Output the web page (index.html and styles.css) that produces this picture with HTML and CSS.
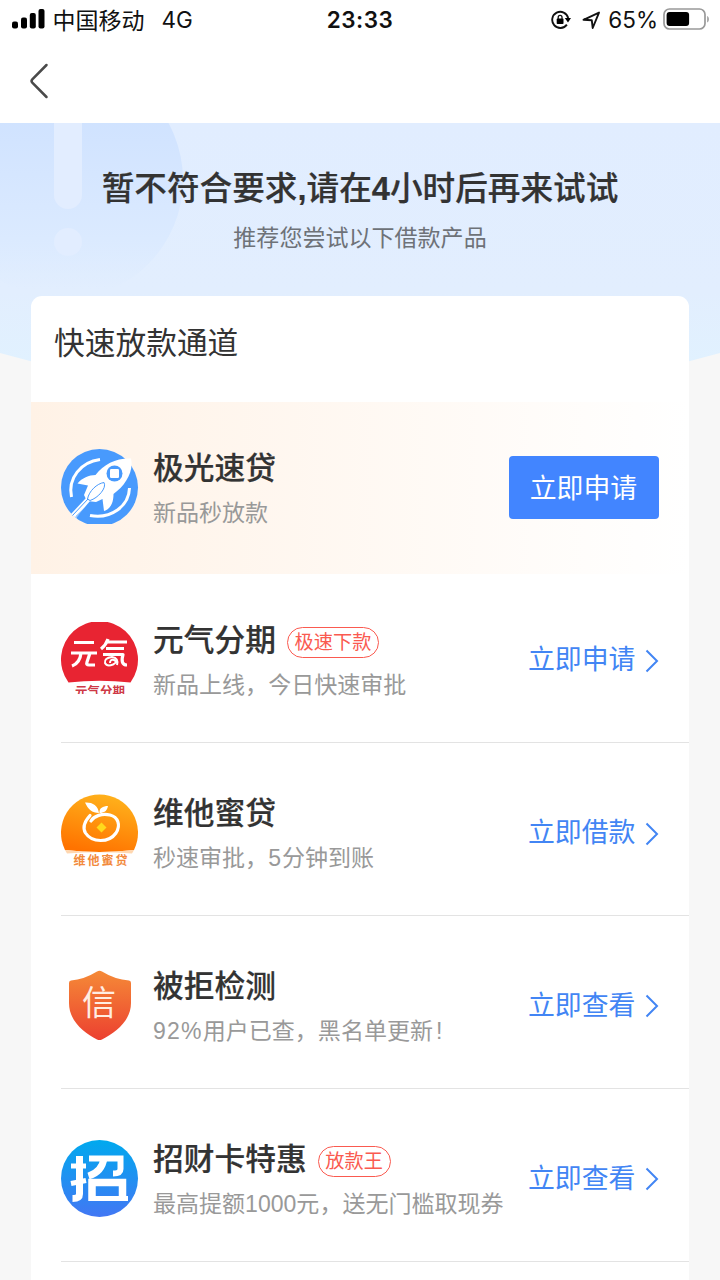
FILE: index.html
```html
<!DOCTYPE html>
<html lang="zh-CN">
<head>
<meta charset="utf-8">
<title>借款产品推荐</title>
<link rel="stylesheet" href="styles.css">
</head>
<body>
<div class="screen">
  <header class="top">
    <div class="status">
      <div class="status-left">
        <svg class="signal" width="33" height="20" viewBox="0 0 33 20"><rect x="0" y="12.500" width="6" height="7" rx="2"/><rect x="9" y="8.500" width="6" height="11" rx="2"/><rect x="17.800" y="4" width="6" height="15.500" rx="2"/><rect x="26.500" y="0" width="6" height="19.500" rx="2"/></svg>
        <span class="carrier">中国移动</span><span class="network">4G</span>
      </div>
      <div class="clock">23:33</div>
      <div class="status-right">
        <svg class="lock" width="20" height="20" viewBox="0 0 20 20"><path d="M15.900 14.600A8.100 8.100 0 1 1 17.200 8" fill="none" stroke="#111" stroke-width="1.900"/><path d="M13.800 8h6.200l-3 4.500z"/><rect x="5.700" y="8.600" width="6.800" height="5.400" rx=".8"/><path d="M7.200 9V7.300a1.900 1.900 0 0 1 3.800 0V9" fill="none" stroke="#111" stroke-width="1.300"/></svg>
        <svg class="locate" width="19" height="19" viewBox="0 0 19 19"><path d="M1.500 8.800 17 1.600 10.700 17 9.800 9.300z" fill="none" stroke="#111" stroke-width="1.900" stroke-linejoin="round"/></svg>
        <span class="percent">65%</span>
        <svg class="battery" width="47" height="23" viewBox="0 0 47 23"><rect x="1" y="1" width="41" height="20" rx="5.500" fill="none" stroke="#999" stroke-width="1.700"/><rect x="3.600" y="4" width="22.500" height="14" rx="3" fill="#000"/><path d="M44.200 8v6.600c2.200-1 2.200-5.600 0-6.600z" fill="#999"/></svg>
      </div>
    </div>
    <nav class="nav"><svg width="20" height="36" viewBox="0 0 20 36"><path d="M17.500 2 3.300 16.300q-1.500 1.700 0 3.400L17.500 34" fill="none" stroke="#4a4a4a" stroke-width="2.500" stroke-linecap="round"/></svg></nav>
  </header>

  <main class="page">
    <svg class="backdrop" width="720" height="257" viewBox="0 0 720 257">
      <defs>
        <linearGradient id="sky" x2="0" y2="1"><stop stop-color="#e1edff"/><stop offset=".6" stop-color="#e2eefe"/><stop offset="1" stop-color="#e0f3ff"/></linearGradient>
        <linearGradient id="disc" x2="0" y2="1"><stop offset=".2" stop-color="#cfe2ff"/><stop offset=".75" stop-color="#dbeaff"/><stop offset=".96" stop-color="#dbeaff" stop-opacity="0"/></linearGradient>
      </defs>
      <path d="M0 0H720V230Q360 330 0 230Z" fill="url(#sky)"/>
      <circle cx="64" cy="57" r="119" fill="url(#disc)"/>
      <path d="M54 0H82V72a14 14 0 0 1-28 0Z" fill="#e2edff"/>
      <circle cx="68" cy="119" r="14" fill="#e2edff"/>
    </svg>

    <section class="hero">
      <h1>暂不符合要求<b>,</b>请在<b>4</b>小时后再来试试</h1>
      <p>推荐您尝试以下借款产品</p>
    </section>

    <section class="card">
      <h2>快速放款通道</h2>

      <article class="row featured">
        <svg class="logo" width="78" height="78" viewBox="0 0 78 78">
          <defs><clipPath id="c1"><path d="M0 0H78V75H0Z"/></clipPath></defs>
          <g clip-path="url(#c1)">
            <circle cx="38.500" cy="38.500" r="38.500" fill="#489afd"/>
            <g fill="none" stroke="#fff" stroke-width="3"><path d="M39 10.500C20 13 6.500 29 10.500 48"/><path d="M68.500 39C68 57 50 70.500 29 66.500"/></g>
            <path d="M70 9.500C55 9 43 15 34.500 26 28 26 21 29 16.500 34.500L27 36.500 23 46 26 52 35 53 41.500 50 43 62C50 60 52.500 53 52.500 45 64 37 73 23 70 9.500Z" fill="#fff"/>
            <circle cx="53.500" cy="24.500" r="8" fill="#489afd"/><rect x="49" y="20" width="9" height="9" rx="1.200" fill="#fff"/>
            <path d="M10 65 25 49 29 52 15 69Z" fill="#fff"/>
            <path d="M11.500 66.500 27 50M14.500 68 30 53M26.500 50C28 42 36 34.500 43 33.500 46 39 37 49 29 51.500Z" fill="none" stroke="#489afd"/>
          </g>
        </svg>
        <div class="info"><div class="name"><h3>极光速贷</h3></div><p>新品秒放款</p></div>
        <button class="apply">立即申请</button>
      </article>

      <article class="row">
        <svg class="logo" width="78" height="78" viewBox="0 0 78 78">
          <defs><clipPath id="c2"><path d="M0 0H78V72H0Z"/></clipPath></defs>
          <path d="M7.500 60.500A38.500 38.500 0 1 1 69.500 60.500Q38.500 57 7.500 60.500Z" fill="#e82432"/>
          <g fill="none" stroke="#fff" stroke-width="3.200" stroke-linejoin="round">
            <path d="M13 20.500H33M10 31H36M20 31Q19 41 11 44M29 31 26 40Q25 43 28 43H34"/>
            <path d="M47 17Q45 23 40 27M46 20H66M45 26.500H63M42 32.500H62Q59 43 66 43"/>
            <path d="M49 41Q49 37 53 38 57 40 52 42.500 46 45 44 41 43 36 51 35 58 36 56 43" stroke-width="2"/>
          </g>
          <text class="logo-caption" x="14" y="73.500" textLength="50" lengthAdjust="spacingAndGlyphs" fill="#ce3946" clip-path="url(#c2)">元气分期</text>
        </svg>
        <div class="info"><div class="name"><h3>元气分期</h3><span class="tag">极速下款</span></div><p>新品上线，今日快速审批</p></div>
        <a class="action">立即申请<svg class="chevron" width="14" height="24" viewBox="0 0 14 24"><path d="M1.500 1.500 12 12 1.500 22.500"/></svg></a>
      </article>

      <article class="row">
        <svg class="logo" width="78" height="78" viewBox="0 0 78 78">
          <defs><linearGradient id="orange" x1=".7" x2=".4" y2="1"><stop stop-color="#ffb31c"/><stop offset="1" stop-color="#ff7300"/></linearGradient></defs>
          <path d="M4 56A38.500 38.500 0 1 1 73 56Q38.500 60 4 56Z" fill="url(#orange)"/>
          <path d="M4 56Q38 60 73 56L71 59.500Q38 57 6 59.500Z" fill="#ffd7b0"/>
          <path d="M24 8.500C31 8 37 11 38 19 31 19 27 15 24 8.500ZM38.500 19C38 14 42 12 47 12 46 17 43 19 38.500 19Z" fill="#fff"/>
          <path d="M29 21.500C24 27 21 33 24.500 39 31 49 48 49 55 39 60 31 57 23 49 21 41 19 33 22 30 27" fill="none" stroke="#fff" stroke-width="3.200" stroke-linecap="round"/>
          <path d="m40.500 28.500 5 5-5 5-5-5z" fill="#ffd91c"/>
          <text class="logo-caption" x="12.500" y="70.500" textLength="54" fill="#f28a3c">维他蜜贷</text>
        </svg>
        <div class="info"><div class="name"><h3>维他蜜贷</h3></div><p>秒速审批，<span class="minutes">5</span>分钟到账</p></div>
        <a class="action">立即借款<svg class="chevron" width="14" height="24" viewBox="0 0 14 24"><path d="M1.500 1.500 12 12 1.500 22.500"/></svg></a>
      </article>

      <article class="row">
        <svg class="logo" width="78" height="78" viewBox="0 0 78 78">
          <defs><linearGradient id="shield" x2="0" y2="1"><stop stop-color="#f58a37"/><stop offset="1" stop-color="#ec4030"/></linearGradient></defs>
          <path d="M36 4.500Q38.500 3 41 4.500 54 12.500 68 13.500 70 13.700 70 16V36C70 54 54 66 41 72.500Q38.500 73.500 36 72.500C23 66 8 54 8 36V16Q8 13.700 10 13.500 23 12.500 36 4.500Z" fill="url(#shield)"/>
          <text class="shield-text" x="21" y="48">信</text>
        </svg>
        <div class="info"><div class="name"><h3>被拒检测</h3></div><p><span class="rate">92%</span>用户已查，黑名单更新<span class="bang">!</span></p></div>
        <a class="action">立即查看<svg class="chevron" width="14" height="24" viewBox="0 0 14 24"><path d="M1.500 1.500 12 12 1.500 22.500"/></svg></a>
      </article>

      <article class="row">
        <svg class="logo" width="78" height="78" viewBox="0 0 78 78">
          <defs><linearGradient id="blue" x2="0" y2="1"><stop stop-color="#00a9ee"/><stop offset="1" stop-color="#4277f4"/></linearGradient></defs>
          <circle cx="38.500" cy="38.500" r="38.500" fill="url(#blue)"/>
          <g fill="none" stroke="#fff">
            <path d="M10 26H25M10 43.500 25 40.500" stroke-width="5"/>
            <path d="M18.500 16V54Q18.500 58.500 11.500 58.500" stroke-width="7"/>
            <path d="M28 18.500H59.500V29Q59.500 33.500 52 33.500" stroke-width="6"/>
            <path d="M43 18Q41 32 27.500 36" stroke-width="7"/>
            <path d="M31 61V42.500H61.500V60" stroke-width="7.500"/><path d="M29 58.500H67" stroke-width="5"/>
          </g>
        </svg>
        <div class="info"><div class="name"><h3>招财卡特惠</h3><span class="tag">放款王</span></div><p>最高提额1000元，送无门槛取现券</p></div>
        <a class="action">立即查看<svg class="chevron" width="14" height="24" viewBox="0 0 14 24"><path d="M1.500 1.500 12 12 1.500 22.500"/></svg></a>
      </article>
    </section>
  </main>
</div>
</body>
</html>
```
FILE: styles.css
```css
* { box-sizing: border-box; }
body { margin: 0; background: #f7f7f7; color: #333; font-family: "Liberation Sans", "Noto Sans CJK SC", sans-serif; }
h1, h2, h3, p { margin: 0; }
svg { display: block; flex-shrink: 0; }
.screen { width: 720px; height: 1280px; overflow: hidden; }
.top { height: 123px; background: #fff; }
.status { display: grid; grid-template-columns: 1fr auto 1fr; align-items: center; height: 40px; padding: 0 12px; color: #111; font-size: 23px; line-height: 38px; }
.status-left, .status-right { display: flex; align-items: center; }
.signal { margin-top: -2px; }
.carrier { margin-left: 7.500px; padding-top: 1px; }
.network { margin-left: 17px; font-family: Inter, sans-serif; font-size: 22.500px; }
.clock { padding-bottom: 1px; font-family: Inter, sans-serif; font-size: 22.500px; font-weight: 600; letter-spacing: .5px; }
.status-right { justify-content: flex-end; margin-right: -2px; }
.lock { margin-right: 1px; }
.locate { margin-left: 10px; }
.percent { margin-left: 7px; font-family: Inter, sans-serif; font-size: 22.500px; }
.battery { margin: -1px 0 0 5px; }
.nav { padding: 23px 0 0 29px; }
.page { position: relative; }
.backdrop { position: absolute; top: 0; left: 0; }
.hero { position: relative; height: 172.500px; padding-top: 42px; text-align: center; }
.hero h1 { font-size: 32.640px; line-height: 48px; font-weight: 500; -webkit-text-stroke: .2px #333; }
.hero p { margin-top: 8px; font-size: 23.040px; line-height: 34px; color: #6e7278; }
.card { position: relative; width: 658.500px; height: 1100px; margin-left: 30.500px; border-radius: 11px 11px 0 0; background: #fff; }
.card h2 { height: 106px; padding: 25px 0 0 23.500px; font-size: 30.720px; line-height: 46px; font-weight: 400; }
.row { display: flex; align-items: flex-start; height: 172.800px; margin-left: 30.500px; padding: 51px 30.500px 0 0; border-bottom: 1px solid #e3e3e3; }
.featured { height: 172px; margin: 0 0 -2.900px; padding: 47.500px 30.500px 0; border: 0; background: linear-gradient(90deg, #fff2e6, #fff); }
.info { flex: 1; margin-left: 14px; padding-top: .500px; white-space: nowrap; }
.name { display: flex; align-items: center; height: 38px; }
.name h3 { font-size: 30.720px; line-height: 38px; font-weight: 500; -webkit-text-stroke: .2px #333; }
.info p { margin-top: 8px; font-size: 23.040px; line-height: 34px; color: #999; }
.rate { letter-spacing: 1.200px; }
.minutes { letter-spacing: 1px; }
.bang { margin-left: 3px; }
.tag { height: 31px; margin: 3px 0 0 11px; padding: 1px 6.700px 0; border: 1px solid #fa5a50; border-radius: 16px; color: #fa5a50; font-size: 19.200px; line-height: 28px; }
.action { display: flex; align-items: center; color: #4285f4; font-size: 26.880px; line-height: 40px; margin-top: 18.700px; }
.chevron { margin: 1px 0 0 9px; fill: none; stroke: #4285f4; stroke-width: 2; }
.apply { width: 150px; height: 63px; margin: 7px 0 0; padding: 0 0 2px; border: 0; border-radius: 4px; background: #4285ff; color: #fff; font: 26.880px/61px "Noto Sans CJK SC", sans-serif; }
.logo-caption { font: 700 12px "Noto Sans CJK SC", sans-serif; }
.shield-text { fill: #ffede2; font: 400 34px "Noto Sans CJK SC", sans-serif; }
```
